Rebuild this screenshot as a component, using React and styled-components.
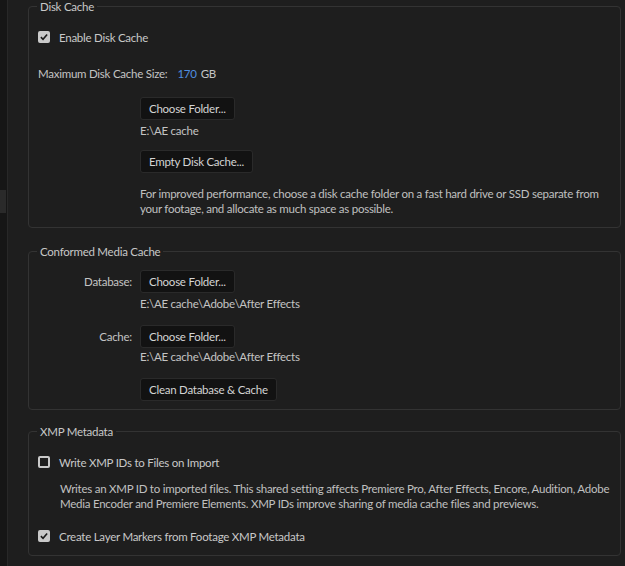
import React from "react";
import styled, { createGlobalStyle } from "styled-components";

const Global = createGlobalStyle`
  html, body { margin: 0; padding: 0; background: #1e1e1e; }
  body {
    font-family: Lato, "Liberation Sans", sans-serif;
    font-size: 11.5px;
    letter-spacing: -0.25px;
    color: #c4c4c4;
  }
  * { box-sizing: border-box; }
`;

const Page = styled.div`
  display: flex;
  width: 625px;
  height: 566px;
  overflow: hidden;
  background: #1e1e1e;
`;

const Strip = styled.div`
  width: 8px;
  flex: none;
  background: #161616;
  border-right: 1px solid #282828;
  display: flex;
  flex-direction: column;
`;

const StripTab = styled.div`
  margin-top: 190px;
  height: 23px;
  width: 6px;
  background: #2a2a2a;
`;

const Panel = styled.div`
  flex: 1;
  padding: 0 4px 0 20px;
  display: flex;
  flex-direction: column;
`;

const Group = styled.fieldset`
  margin: ${(p) => p.$mt || 0}px 0 0 0;
  padding: ${(p) => p.$pt}px 9px ${(p) => p.$pb}px 9px;
  border: 1px solid #333333;
  border-radius: 4px;
  min-width: 0;
  display: flex;
  flex-direction: column;
  align-items: flex-start;
`;

const Legend = styled.legend`
  padding: 0 3px;
  margin-left: -1px;
  line-height: 13px;
  color: #c8c8c8;
`;

const CheckRow = styled.label`
  display: flex;
  align-items: center;
  gap: 9px;
  height: 16px;
  margin-top: ${(p) => p.$mt || 0}px;
  color: #c8c8c8;
`;

const Box = styled.span`
  width: 12px;
  height: 12px;
  border-radius: 2px;
  flex: none;
  display: flex;
  align-items: center;
  justify-content: center;
  background: ${(p) => (p.$checked ? "#c9c9c9" : "transparent")};
  border: 2px solid #c9c9c9;
`;

const SizeRow = styled.div`
  display: flex;
  align-items: center;
  height: 16px;
  margin-top: ${(p) => p.$mt || 0}px;
`;

const SizeValue = styled.span`
  color: #4f8ee0;
  margin-left: 10px;
  margin-right: 4px;
`;

const FieldRow = styled.div`
  display: grid;
  grid-template-columns: 94px auto;
  column-gap: 8px;
  align-items: center;
  margin-top: ${(p) => p.$mt || 0}px;
`;

const FieldLabel = styled.span`
  text-align: right;
  color: #c4c4c4;
`;

const Indent = styled.div`
  margin-left: 102px;
  margin-top: ${(p) => p.$mt || 0}px;
`;

const Button = styled.button`
  height: 23px;
  padding: 0 8px;
  background: #121212;
  border: 1px solid #2a2a2a;
  border-radius: 3px;
  color: #d4d4d4;
  font-family: inherit;
  font-size: inherit;
  letter-spacing: inherit;
  line-height: 21px;
  cursor: pointer;
`;

const Path = styled.div`
  line-height: 14px;
  color: #c4c4c4;
`;

const Note = styled.p`
  margin: ${(p) => p.$mt || 0}px 0 0 ${(p) => p.$ml || 0}px;
  line-height: 15px;
  white-space: nowrap;
  color: #c0c0c0;
`;

const Check = () => (
  <svg width="9" height="8" viewBox="0 0 9 8">
    <path d="M1 4.2 L3.4 6.6 L8 1.2" fill="none" stroke="#1a1a1a" strokeWidth="1.8" />
  </svg>
);

export default function App() {
  return (
    <Page>
      <Global />
      <Strip>
        <StripTab />
      </Strip>
      <Panel>
        <Group $pt={16} $pb={11}>
          <Legend>Disk Cache</Legend>
          <CheckRow>
            <Box $checked><Check /></Box>
            Enable Disk Cache
          </CheckRow>
          <SizeRow $mt={20}>
            Maximum Disk Cache Size:
            <SizeValue>170</SizeValue>GB
          </SizeRow>
          <Indent $mt={16}>
            <Button>Choose Folder...</Button>
          </Indent>
          <Indent $mt={4}>
            <Path>E:\AE cache</Path>
          </Indent>
          <Indent $mt={12}>
            <Button>Empty Disk Cache...</Button>
          </Indent>
          <Indent $mt={13}>
            <Note>
              For improved performance, choose a disk cache folder on a fast hard drive or SSD separate from
              <br />
              your footage, and allocate as much space as possible.
            </Note>
          </Indent>
        </Group>

        <Group $mt={17} $pt={12} $pb={8}>
          <Legend>Conformed Media Cache</Legend>
          <FieldRow>
            <FieldLabel>Database:</FieldLabel>
            <div><Button>Choose Folder...</Button></div>
          </FieldRow>
          <Indent $mt={4}>
            <Path>E:\AE cache\Adobe\After Effects</Path>
          </Indent>
          <FieldRow $mt={14}>
            <FieldLabel>Cache:</FieldLabel>
            <div><Button>Choose Folder...</Button></div>
          </FieldRow>
          <Indent $mt={2}>
            <Path>E:\AE cache\Adobe\After Effects</Path>
          </Indent>
          <Indent $mt={14}>
            <Button>Clean Database &amp; Cache</Button>
          </Indent>
        </Group>

        <Group $mt={15} $pt={16} $pb={11}>
          <Legend>XMP Metadata</Legend>
          <CheckRow>
            <Box />
            Write XMP IDs to Files on Import
          </CheckRow>
          <Note $mt={11} $ml={22}>
            Writes an XMP ID to imported files. This shared setting affects Premiere Pro, After Effects, Encore, Audition, Adobe
            <br />
            Media Encoder and Premiere Elements. XMP IDs improve sharing of media cache files and previews.
          </Note>
          <CheckRow $mt={17}>
            <Box $checked><Check /></Box>
            Create Layer Markers from Footage XMP Metadata
          </CheckRow>
        </Group>
      </Panel>
    </Page>
  );
}
